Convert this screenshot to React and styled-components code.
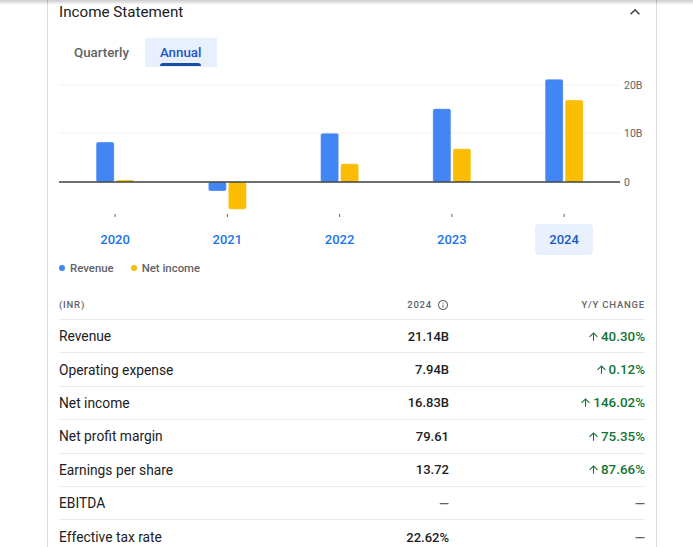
import React from "react";
import styled, { createGlobalStyle } from "styled-components";

const Global = createGlobalStyle`
  html, body { margin: 0; padding: 0; background: #fff; }
  body { font-family: Roboto, "Noto Sans", Arial, sans-serif; color: #202124; overflow: hidden; }
`;

const TopShadow = styled.div`
  position: fixed;
  top: 0; left: 0; right: 0;
  height: 5px;
  background: linear-gradient(rgba(0,0,0,0.2), rgba(0,0,0,0));
  pointer-events: none;
  z-index: 2;
`;

const Card = styled.section`
  margin-left: 47px;
  width: 610px;
  box-sizing: border-box;
  border-left: 1px solid #dadce0;
  border-right: 1px solid #dadce0;
  padding: 0 11px;
  height: 547px;
`;

const Header = styled.div`
  display: flex;
  align-items: center;
  justify-content: space-between;
  height: 24px;
`;

const Title = styled.h2`
  margin: 0;
  font-size: 15.2px;
  font-weight: 400;
  line-height: 24px;
  color: #202124;
`;

const Chevron = styled.svg`
  width: 20px;
  height: 20px;
  fill: #444746;
`;

const Tabs = styled.div`
  display: flex;
  margin-top: 14px;
  height: 29px;
`;

const Tab = styled.div`
  position: relative;
  display: flex;
  align-items: center;
  padding: 0 16px 0 15px;
  font-size: 13.3px;
  font-weight: 500;
  color: ${(p) => (p.$active ? "#1a56c4" : "#5f6368")};
  background: ${(p) => (p.$active ? "#e8f0fe" : "transparent")};
  span { position: relative; display: inline-block; }
  span::after {
    content: "";
    display: ${(p) => (p.$active ? "block" : "none")};
    position: absolute;
    left: 0; right: 0;
    top: 18px;
    height: 3px;
    border-radius: 3px 3px 0 0;
    background: #174ea6;
  }
`;

const ChartSvg = styled.svg`
  display: block;
  margin-top: 3px;
  width: 586px;
  height: 150px;
  overflow: visible;
`;

const Years = styled.div`
  display: grid;
  grid-template-columns: repeat(5, 112.25px);
  margin-top: 4px;
  height: 31px;
`;

const Year = styled.div`
  justify-self: center;
  width: 58px;
  height: 31px;
  border-radius: 4px;
  display: flex;
  align-items: center;
  justify-content: center;
  font-size: 13px;
  font-weight: 500;
  color: ${(p) => (p.$active ? "#185abc" : "#1a73e8")};
  background: ${(p) => (p.$active ? "#e8f0fe" : "transparent")};
`;

const Legend = styled.div`
  display: flex;
  gap: 17px;
  margin-top: 6px;
  height: 14px;
  align-items: center;
`;

const LegendItem = styled.div`
  display: flex;
  align-items: center;
  gap: 5px;
  font-size: 11.4px;
  font-weight: 500;
  color: #5f6368;
  &::before {
    content: "";
    width: 6px;
    height: 6px;
    border-radius: 50%;
    background: ${(p) => p.$color};
  }
`;

const Table = styled.div`
  margin-top: 15px;
`;

const Row = styled.div`
  display: grid;
  grid-template-columns: 1fr 120px 196px;
  align-items: center;
  height: ${(p) => (p.$head ? "30px" : "33.4px")};
  box-sizing: border-box;
  border-bottom: ${(p) => (p.$last ? "none" : "1px solid #e8eaed")};
`;

const HeadCell = styled.div`
  font-size: 9.5px;
  font-weight: 500;
  letter-spacing: 0.8px;
  color: #5f6368;
  display: flex;
  align-items: center;
  justify-content: ${(p) => (p.$right ? "flex-end" : "flex-start")};
  gap: 5px;
`;

const Label = styled.div`
  font-size: 13.8px;
  font-weight: 400;
  color: #202124;
`;

const Value = styled.div`
  font-size: 13px;
  font-weight: 500;
  color: ${(p) => (p.$dash ? "#5f6368" : "#202124")};
  text-align: right;
`;

const Change = styled.div`
  display: flex;
  align-items: center;
  justify-content: flex-end;
  gap: 1px;
  font-size: 13.4px;
  font-weight: 500;
  color: ${(p) => (p.$dash ? "#5f6368" : "#137333")};
`;

const SmallIcon = styled.svg`
  width: ${(p) => p.$size}px;
  height: ${(p) => p.$size}px;
  fill: currentColor;
  flex: none;
`;

const COL = 112.25;
const BASE = 112;
const PX = 4.87;
const data = [
  { y: "2020", r: 8.2, n: 0.4 },
  { y: "2021", r: -1.85, n: -5.6 },
  { y: "2022", r: 10, n: 3.76 },
  { y: "2023", r: 15.05, n: 6.84 },
  { y: "2024", r: 21.1, n: 16.83 },
];

function Bar({ x, v, color }) {
  const h = Math.abs(v) * PX;
  const y = v >= 0 ? BASE - h : BASE;
  return <rect x={x} y={y} width={18} height={Math.max(h, 2)} rx={2} fill={color} stroke="rgba(255,255,255,0.6)" strokeWidth="0.5" />;
}

function Chart() {
  return (
    <ChartSvg viewBox="0 0 586 150">
      <line x1="0" x2="561" y1="15" y2="15" stroke="#f1f3f4" strokeWidth="1" />
      <line x1="0" x2="561" y1="63" y2="63" stroke="#f1f3f4" strokeWidth="1" />
      {data.map((d, i) => {
        const c = COL * i + COL / 2;
        return (
          <g key={d.y}>
            <Bar x={c - 19} v={d.r} color="#4285f4" />
            <Bar x={c + 1} v={d.n} color="#fbbc04" />
            <rect x={c - 0.5} y={144} width={1} height={3} fill="#5f6368" />
          </g>
        );
      })}
      <line x1="0" x2="561" y1={BASE} y2={BASE} stroke="#3c4043" strokeWidth="1.3" />
      <g fontFamily="Roboto, Arial, sans-serif" fontSize="10.5" fill="#5f6368">
        <text x="565" y="19">20B</text>
        <text x="565" y="67">10B</text>
        <text x="565" y="116">0</text>
      </g>
    </ChartSvg>
  );
}

const Up = () => (
  <SmallIcon $size={13} viewBox="0 0 24 24">
    <path d="M4 12l1.41 1.41L11 7.83V20h2V7.83l5.58 5.59L20 12l-8-8-8 8z" />
  </SmallIcon>
);

const rows = [
  ["Revenue", "21.14B", "40.30%"],
  ["Operating expense", "7.94B", "0.12%"],
  ["Net income", "16.83B", "146.02%"],
  ["Net profit margin", "79.61", "75.35%"],
  ["Earnings per share", "13.72", "87.66%"],
  ["EBITDA", null, null],
  ["Effective tax rate", "22.62%", null],
];

export default function App() {
  return (
    <>
      <Global />
      <TopShadow />
      <Card>
        <Header>
          <Title>Income Statement</Title>
          <Chevron viewBox="0 0 24 24">
            <path d="M12 8l-6 6 1.41 1.41L12 10.83l4.59 4.58L18 14z" />
          </Chevron>
        </Header>
        <Tabs>
          <Tab><span>Quarterly</span></Tab>
          <Tab $active><span>Annual</span></Tab>
        </Tabs>
        <Chart />
        <Years>
          {data.map((d) => (
            <Year key={d.y} $active={d.y === "2024"}>{d.y}</Year>
          ))}
        </Years>
        <Legend>
          <LegendItem $color="#4285f4">Revenue</LegendItem>
          <LegendItem $color="#fbbc04">Net income</LegendItem>
        </Legend>
        <Table>
          <Row $head>
            <HeadCell>(INR)</HeadCell>
            <HeadCell $right>
              2024
              <SmallIcon $size={12} viewBox="0 0 24 24">
                <path d="M11 7h2v2h-2zm0 4h2v6h-2zm1-9C6.48 2 2 6.48 2 12s4.48 10 10 10 10-4.48 10-10S17.52 2 12 2zm0 18c-4.41 0-8-3.59-8-8s3.59-8 8-8 8 3.59 8 8-3.59 8-8 8z" />
              </SmallIcon>
            </HeadCell>
            <HeadCell $right>Y/Y CHANGE</HeadCell>
          </Row>
          {rows.map(([l, v, c], i) => (
            <Row key={l} $last={i === rows.length - 1}>
              <Label>{l}</Label>
              <Value $dash={!v}>{v || "—"}</Value>
              {c ? (
                <Change><Up />{c}</Change>
              ) : (
                <Change $dash>—</Change>
              )}
            </Row>
          ))}
        </Table>
      </Card>
    </>
  );
}
